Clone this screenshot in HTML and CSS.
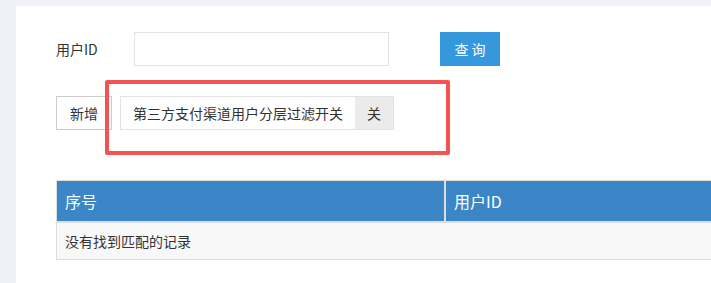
FILE: index.html
```html
<!DOCTYPE html>
<html lang="zh">
<head>
<meta charset="utf-8">
<link rel="stylesheet" href="styles.css">
</head>
<body>
<div class="panel">
  <div class="search-row">
    <label class="label">用户ID</label>
    <input class="input" type="text">
    <button class="btn-query">查 询</button>
  </div>
  <div class="action-row">
    <button class="btn-add">新增</button>
    <div class="switch-group">
      <span class="switch-label">第三方支付渠道用户分层过滤开关</span>
      <span class="switch-state">关</span>
    </div>
    <div class="highlight"></div>
  </div>
  <table class="grid">
    <thead>
      <tr><th class="col-no">序号</th><th>用户ID</th></tr>
    </thead>
    <tbody>
      <tr><td colspan="2">没有找到匹配的记录</td></tr>
    </tbody>
  </table>
</div>
</body>
</html>
```
FILE: styles.css
```css
html, body {
  margin: 0;
  padding: 0;
  background: #eef1f8;
  overflow: hidden;
  font-family: "Noto Sans CJK SC", "Noto Sans", sans-serif;
  font-size: 14px;
  color: #333;
}
.panel {
  box-sizing: border-box;
  margin: 6px 0 0 16px;
  background: #fff;
  padding: 26px 0 0 40px;
  height: calc(100vh - 6px);
  overflow: hidden;
}
.search-row {
  display: flex;
  align-items: center;
  height: 34px;
}
.label {
  width: 78px;
  line-height: 34px;
}
.input {
  box-sizing: border-box;
  width: 255px;
  height: 34px;
  border: 1px solid #e2e2e2;
  margin: 0;
  padding: 0 8px;
  outline: none;
}
.btn-query {
  margin: 0 0 0 51px;
  width: 60px;
  height: 34px;
  border: 0;
  background: #3598dc;
  color: #fff;
  font-family: inherit;
  font-size: 14px;
  padding: 0;
}
.action-row {
  position: relative;
  display: flex;
  gap: 8px;
  margin-top: 30px;
  height: 34px;
}
.btn-add {
  box-sizing: border-box;
  width: 56px;
  height: 34px;
  border: 1px solid #ccc;
  background: #fff;
  color: #333;
  font-family: inherit;
  font-size: 14px;
  padding: 0;
}
.switch-group {
  display: flex;
  box-sizing: border-box;
  height: 34px;
  border: 1px solid #e2e2e2;
}
.switch-label {
  display: flex;
  align-items: center;
  padding: 0 12px;
  width: 210px;
  white-space: nowrap;
  overflow: hidden;
}
.switch-state {
  display: flex;
  align-items: center;
  justify-content: center;
  width: 38px;
  background: #ebebeb;
}
.highlight {
  position: absolute;
  left: 49px;
  top: -16px;
  width: 345px;
  height: 75px;
  box-sizing: border-box;
  border: 4px solid #f35353;
  border-radius: 2px;
}
.grid {
  margin-top: 50px;
  width: 820px;
  border-collapse: collapse;
  border: 1px solid #ddd;
}
.grid th {
  background: #3a86c6;
  color: #fff;
  font-weight: normal;
  font-size: 16px;
  text-align: left;
  height: 40px;
  padding: 0 8px;
  border-left: 2px solid #ddd;
  border-bottom: 2px solid #ddd;
}
.grid th.col-no {
  width: 371px;
  border-left: 0;
}
.grid td {
  background: #f8f8f8;
  height: 36px;
  padding: 0 8px;
}
```
